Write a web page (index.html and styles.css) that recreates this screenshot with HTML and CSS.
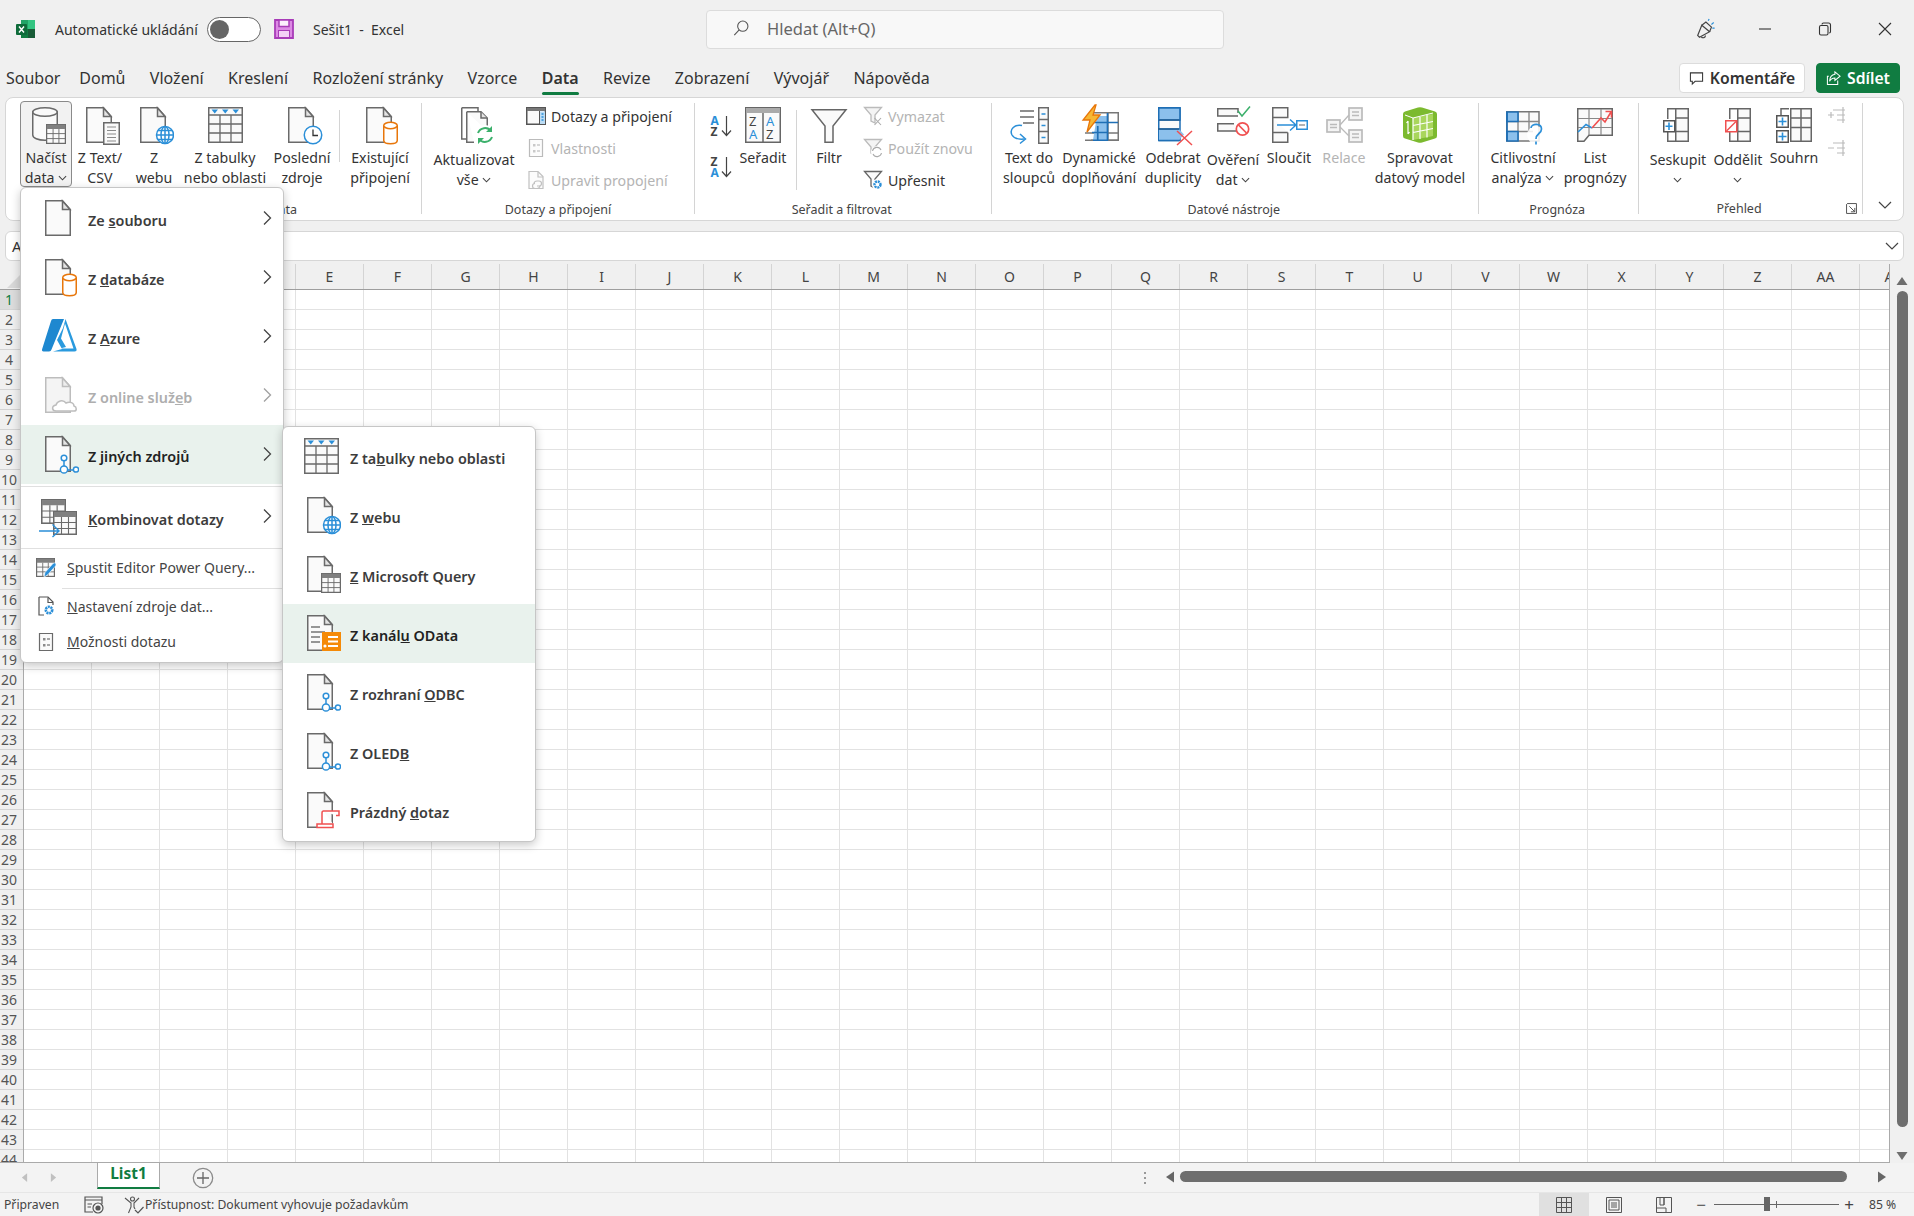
FILE: index.html
```html
<!DOCTYPE html>
<html lang="cs">
<head>
<meta charset="utf-8">
<title>Sešit1 - Excel</title>
<link rel="stylesheet" href="styles.css">
</head>
<body>
<svg class="defs" xmlns="http://www.w3.org/2000/svg">
  <symbol id="i-doc" viewBox="0 0 40 40"><path d="M6.75 2.75H23.5L31.25 11.5V37.25H6.75Z" fill="#fafafa" stroke="#6a6a6a" stroke-width="1.5"/><path d="M23.5 3V11.5H31Z" fill="#e4e4e4" stroke="#6a6a6a" stroke-width="1.5"/></symbol>
  <symbol id="i-docg" viewBox="0 0 40 40"><path d="M6.75 2.75H23.5L31.25 11.5V37.25H6.75Z" fill="#f4f4f4" stroke="#bdbdbd" stroke-width="1.5"/><path d="M23.5 3V11.5H31Z" fill="#eee" stroke="#bdbdbd" stroke-width="1.5"/></symbol>
  <symbol id="i-tbl" viewBox="0 0 24 24"><rect x=".75" y=".75" width="22.5" height="22.5" fill="#fafafa" stroke="#6a6a6a" stroke-width="1.5"/><rect x="1" y="1" width="22" height="5" fill="#808080"/><path d="M8.5 6V23M15.5 6V23M1 11.5H23M1 17.5H23" stroke="#6a6a6a" stroke-width="1.1" fill="none"/></symbol>
  <symbol id="i-cyl" viewBox="0 0 40 40"><path d="M23.75 21V35.5C23.75 37.5 26.5 38.75 30.5 38.75S37.25 37.5 37.25 35.5V21Z" fill="#fff" stroke="#e8760a" stroke-width="1.5"/><ellipse cx="30.5" cy="20.5" rx="6.75" ry="3.25" fill="#fff" stroke="#e8760a" stroke-width="1.5"/></symbol>
  <symbol id="i-globe" viewBox="0 0 40 40"><circle cx="31" cy="30" r="9" fill="#fff"/><g fill="none" stroke="#2b8fd8" stroke-width="1.5"><circle cx="31" cy="30" r="8.5"/><ellipse cx="31" cy="30" rx="4" ry="8.5"/><path d="M31 21.5V38.5M22.5 30H39.5M24 25.5H38M24 34.5H38"/></g></symbol>
  <symbol id="i-nodes" viewBox="0 0 40 40"><g fill="#fff" stroke="#2b8fd8" stroke-width="1.5"><path d="M25 25V36H37" fill="none"/><circle cx="25" cy="24" r="2.8"/><circle cx="25" cy="35.5" r="3.6"/><circle cx="37" cy="35.5" r="2.6"/></g></symbol>
  <symbol id="i-chev" viewBox="0 0 10 6"><path d="M1 1L5 5L9 1" fill="none" stroke="#444" stroke-width="1.2"/></symbol>
  <symbol id="i-right" viewBox="0 0 10 16"><path d="M2 1.5L8.5 8L2 14.5" fill="none" stroke="#444" stroke-width="1.3"/></symbol>
  <symbol id="i-grid3" viewBox="0 0 40 40"><rect x="3.75" y="2.75" width="33.5" height="34.5" fill="#fafafa" stroke="#6a6a6a" stroke-width="1.5"/><path d="M4 10H37M15 10V37M26 10V37M4 19H37M4 28H37" stroke="#6a6a6a" stroke-width="1.3" fill="none"/><path d="M6.5 4.5H13L9.75 8.5ZM17 4.5H23.5L20.25 8.5ZM27.5 4.5H34L30.75 8.5Z" fill="#2b8fd8"/></symbol>
  <symbol id="i-list" viewBox="0 0 20 20"><path d="M3.5 1.5H16.5V18.5H3.5Z" fill="#fafafa" stroke="#6a6a6a" stroke-width="1.2"/><path d="M7 6H9.5V8.5H7ZM7 12H9.5V14.5H7Z" fill="#8a8a8a"/><path d="M11 7H14M11 13H14" stroke="#8a8a8a" stroke-width="1.3"/></symbol>
  <symbol id="i-funnel" viewBox="0 0 20 20"><path d="M1.5 1.5H18.5L12 9V17L8 15V9Z" fill="#f4f4f4" stroke="#bbb" stroke-width="1.3"/></symbol>
</svg>

<div class="app">
  <header class="titlebar">
    <svg class="logo" viewBox="0 0 20 20"><path d="M5 1H19V19H5Z" fill="#21a366"/><path d="M12 1H19V10H12Z" fill="#33c481"/><path d="M5 10H12V19H5Z" fill="#107c41"/><path d="M12 10H19V19H12Z" fill="#185c37"/><rect x="0" y="5" width="11" height="11" rx="1" fill="#0e6b3a"/><path d="M3 7.5L8 13.5M8 7.5L3 13.5" stroke="#fff" stroke-width="1.4"/></svg>
    <span class="autosave">Automatické ukládání</span>
    <span class="toggle"><span class="knob"></span></span>
    <svg class="save" viewBox="0 0 20 20"><path d="M1 1H19V19H1Z" fill="#dc8ae4" stroke="#a83cb8" stroke-width="1.8"/><rect x="5" y="1" width="10" height="6.5" fill="#fbeffc" stroke="#a83cb8" stroke-width="1.5"/><rect x="4.5" y="11.5" width="11" height="7" fill="#f3d0f6" stroke="#a83cb8" stroke-width="1"/></svg>
    <span class="docname">Sešit1&nbsp; -&nbsp; Excel</span>
    <div class="search">
      <svg class="search-ic" viewBox="0 0 20 20"><circle cx="12" cy="8" r="5.7" fill="none" stroke="#555" stroke-width="1.2"/><path d="M8 12L2.5 18" stroke="#555" stroke-width="1.2"/></svg>
      <span>Hledat (Alt+Q)</span>
    </div>
    <div class="winbtns">
      <svg class="winbtn mega" viewBox="0 0 24 24"><path d="M4 19L8.5 8L17 15L6 21Z" fill="none" stroke="#444" stroke-width="1.3"/><path d="M8.5 8L13 4.5L19 10L17 15" fill="none" stroke="#444" stroke-width="1.3"/><path d="M8 20.5a2.5 2.5 0 0 0 4.5-1.5" fill="none" stroke="#444" stroke-width="1.3"/><path d="M19 7L21.5 5M15.5 3L16.5 1M20 11L22.5 11" stroke="#2b8fd8" stroke-width="1.3"/></svg>
      <svg class="winbtn" viewBox="0 0 16 16"><path d="M2 8H14" stroke="#333" stroke-width="1.1"/></svg>
      <svg class="winbtn" viewBox="0 0 16 16"><rect x="2.5" y="4.5" width="8.5" height="9.5" rx="1.5" fill="none" stroke="#333" stroke-width="1.1"/><path d="M5 3.5Q5 2 6.5 2H11.5Q13.5 2 13.5 4V10.5Q13.5 11.8 12.2 12" fill="none" stroke="#333" stroke-width="1.1"/></svg>
      <svg class="winbtn" viewBox="0 0 16 16"><path d="M2 2L14 14M14 2L2 14" stroke="#333" stroke-width="1.1"/></svg>
    </div>
  </header>

  <nav class="tabbar">
    <span class="tab first">Soubor</span>
    <span class="tab">Domů</span>
    <span class="tab">Vložení</span>
    <span class="tab">Kreslení</span>
    <span class="tab">Rozložení stránky</span>
    <span class="tab">Vzorce</span>
    <span class="tab active">Data</span>
    <span class="tab">Revize</span>
    <span class="tab">Zobrazení</span>
    <span class="tab">Vývojář</span>
    <span class="tab">Nápověda</span>
    <span class="tab-actions">
      <button class="comment"><svg viewBox="0 0 16 16"><path d="M1.5 2H14.5V11H6.5L3.5 14V11H1.5Z" fill="none" stroke="#333" stroke-width="1.1"/></svg>Komentáře</button>
      <button class="share"><svg viewBox="0 0 16 16"><path d="M3 5.5H1.5V14.5H12.5V10" fill="none" stroke="#fff" stroke-width="1.1"/><path d="M9.5 1L15 5.5L9.5 10V7.5C7 7.5 5 8.5 3.8 11C4 7 6 4 9.5 3.5Z" fill="none" stroke="#fff" stroke-width="1.1"/></svg>Sdílet</button>
    </span>
  </nav>

  <section class="ribbon">
    <div class="group g1">
      <div class="body">
        <div class="btn w52 pressed">
          <svg class="ic"><path d="M6.75 7V30C6.75 33 12 35.25 19 35.25S31.25 33 31.25 30V7Z" fill="#fafafa" stroke="#6a6a6a" stroke-width="1.5"/><ellipse cx="19" cy="7" rx="12.25" ry="4.25" fill="#fafafa" stroke="#6a6a6a" stroke-width="1.5"/><use href="#i-tbl" x="20" y="19" width="20" height="20"/></svg>
          <span class="lbl">Načíst<br>data <svg class="chev"><use href="#i-chev"/></svg></span>
        </div>
        <div class="btn w56">
          <svg class="ic"><use href="#i-doc"/><path d="M23.75 17.75H39.25V39.25H23.75Z" fill="#fafafa" stroke="#6a6a6a" stroke-width="1.5"/><path d="M27 22H36M27 25.5H36M27 29H36M27 32.5H36M27 36H36" stroke="#8a8a8a" stroke-width="1.2"/></svg>
          <span class="lbl">Z Text/<br>CSV</span>
        </div>
        <div class="btn w52">
          <svg class="ic"><use href="#i-doc"/><use href="#i-globe"/></svg>
          <span class="lbl">Z<br>webu</span>
        </div>
        <div class="btn w90">
          <svg class="ic"><use href="#i-grid3"/></svg>
          <span class="lbl">Z tabulky<br>nebo oblasti</span>
        </div>
        <div class="btn w64">
          <svg class="ic"><use href="#i-doc"/><circle cx="31" cy="30" r="8.75" fill="#fff" stroke="#2b8fd8" stroke-width="1.5"/><path d="M31 24.5V30.5H36" fill="none" stroke="#333" stroke-width="1.3"/></svg>
          <span class="lbl">Poslední<br>zdroje</span>
        </div>
        <i class="sep s1"></i>
        <div class="btn w70">
          <svg class="ic"><use href="#i-doc"/><use href="#i-cyl"/></svg>
          <span class="lbl">Existující<br>připojení</span>
        </div>
      </div>
      <div class="glabel">Načíst a transformovat data</div>
    </div>

    <div class="group g2">
      <div class="body">
        <div class="btn w104 low">
          <svg class="ic"><path d="M7.75 2.75H24V6M7.75 2.75V34H12" fill="none" stroke="#6a6a6a" stroke-width="1.5"/><path d="M12.75 6.75H27L33.25 13V26M12.75 6.75V37.25H20" fill="#fafafa" stroke="#6a6a6a" stroke-width="1.5"/><path d="M27 7V13H33" fill="#e4e4e4" stroke="#6a6a6a" stroke-width="1.5"/><circle cx="31" cy="30" r="10" fill="#fff"/><path d="M24 28A7.5 7.5 0 0 1 37 26M38 32A7.5 7.5 0 0 1 25 34" fill="none" stroke="#3bb06b" stroke-width="2"/><path d="M38 21V27H32ZM24 39V33H30Z" fill="#3bb06b"/></svg>
          <span class="lbl">Aktualizovat<br>vše <svg class="chev"><use href="#i-chev"/></svg></span>
        </div>
        <div class="col">
          <div class="sm"><svg class="ic20" viewBox="0 0 20 20"><rect x=".75" y="1.75" width="18.5" height="16.5" fill="#fafafa" stroke="#555" stroke-width="1.5"/><rect x="1" y="2" width="18" height="3" fill="#777"/><path d="M13.5 5V18" stroke="#555"/><path d="M14 5.5H19V18H14Z" fill="#bcdcf4"/><path d="M15.5 8H17.5M15.5 11H17.5M15.5 14H17.5" stroke="#2b8fd8" stroke-width="1.3"/></svg>Dotazy a připojení</div>
          <div class="sm off"><svg class="ic20 dim" viewBox="0 0 20 20"><use href="#i-list"/></svg>Vlastnosti</div>
          <div class="sm off"><svg class="ic20 dim" viewBox="0 0 20 20"><path d="M3 1.5H12L17 6.5V18.5H3Z" fill="#fafafa" stroke="#777" stroke-width="1.2"/><path d="M12 2V7H17" fill="none" stroke="#777" stroke-width="1.2"/><path d="M8 14a3 3 0 0 1 3-3h2a2.5 2.5 0 0 1 0 5h-2M14 15.5a3 3 0 0 1-3 3H9a2.5 2.5 0 0 1 0-5" fill="none" stroke="#777" stroke-width="1.2"/></svg>Upravit propojení</div>
        </div>
      </div>
      <div class="glabel">Dotazy a připojení</div>
    </div>

    <div class="group g3">
      <div class="body">
        <div class="sortcol">
          <svg class="sorti" viewBox="0 0 22 24"><text x="0" y="11" class="az blue">A</text><text x="0" y="22" class="az">Z</text><path d="M16 2V21M11.5 16.5L16 21.5L20.5 16.5" fill="none" stroke="#444" stroke-width="1.2"/></svg>
          <svg class="sorti" viewBox="0 0 22 24"><text x="0" y="11" class="az">Z</text><text x="0" y="22" class="az blue">A</text><path d="M16 2V21M11.5 16.5L16 21.5L20.5 16.5" fill="none" stroke="#444" stroke-width="1.2"/></svg>
        </div>
        <div class="btn w56">
          <svg class="ic"><rect x="2.75" y="2.75" width="34.5" height="34.5" fill="#fafafa" stroke="#666" stroke-width="1.5"/><rect x="3" y="3" width="34" height="5" fill="#aaa"/><path d="M20 8V37" stroke="#666" stroke-width="1.5"/><text x="6" y="21" class="az2">Z</text><text x="6" y="34" class="az2 blue">A</text><text x="23" y="21" class="az2 blue">A</text><text x="23" y="34" class="az2">Z</text></svg>
          <span class="lbl">Seřadit</span>
        </div>
        <i class="sep s2"></i>
        <div class="btn w54">
          <svg class="ic"><path d="M3 4.75H37L24 21V37.25H16V21Z" fill="#fafafa" stroke="#666" stroke-width="1.5"/></svg>
          <span class="lbl">Filtr</span>
        </div>
        <div class="col c3">
          <div class="sm off"><svg class="ic20" viewBox="0 0 20 20"><use href="#i-funnel"/><path d="M11.5 12L18 19M18 12L11.5 19" stroke="#aaa" stroke-width="1.1"/></svg>Vymazat</div>
          <div class="sm off"><svg class="ic20" viewBox="0 0 20 20"><use href="#i-funnel"/><circle cx="14" cy="14" r="6" fill="#fff"/><path d="M9.5 13A4.5 4.5 0 0 1 18 12M18.5 15A4.5 4.5 0 0 1 10 16" fill="none" stroke="#aaa" stroke-width="1.1"/></svg>Použít znovu</div>
          <div class="sm"><svg class="ic20" viewBox="0 0 20 20"><path d="M1.5 1.5H18.5L12 9V18L8 16V9Z" fill="#fafafa" stroke="#666" stroke-width="1.3"/><circle cx="14.5" cy="14.5" r="5.5" fill="#fff"/><circle cx="14.5" cy="14.5" r="3" fill="none" stroke="#2b8fd8" stroke-width="2.4" stroke-dasharray="2 .8"/></svg>Upřesnit</div>
        </div>
      </div>
      <div class="glabel">Seřadit a filtrovat</div>
    </div>

    <div class="group g4">
      <div class="body">
        <div class="btn w64">
          <svg class="ic"><path d="M11 6H25M11 12H25M14 18H25" stroke="#6a6a6a" stroke-width="1.5"/><rect x="29.75" y="2.75" width="9.5" height="35.5" fill="#fafafa" stroke="#6a6a6a" stroke-width="1.5"/><path d="M30 14.5H39M30 26.5H39" stroke="#6a6a6a" stroke-width="1.5"/><path d="M32.5 9H36.5M32.5 20.5H36.5M32.5 32.5H36.5" stroke="#2b8fd8" stroke-width="1.5"/><path d="M13 20.5C6 19 0 24 3 30C5 33.5 10 34.5 15 34" fill="none" stroke="#2b8fd8" stroke-width="1.5"/><path d="M11 29L16.5 34L11 38.5" fill="none" stroke="#2b8fd8" stroke-width="1.5"/></svg>
          <span class="lbl">Text do<br>sloupců</span>
        </div>
        <div class="btn w76">
          <svg class="ic"><path d="M12 7.75H39.25V35.25H12" fill="none" stroke="#777" stroke-width="1.5"/><path d="M6 28H39M6 35.25H39M29 8V35" stroke="#777" stroke-width="1.3"/><path d="M18 11H28.5V35H14Z" fill="#8cc0ec"/><path d="M13 17.5H39M13 27.5H28.5M18.75 21V35.5M28.5 8V35.5M14 35.25H29" fill="none" stroke="#1f6fb5" stroke-width="1.7"/><path d="M16 0H17L14 10H21L8 27L11 15H4Z" fill="#f7b733" stroke="#e8760a" stroke-width="1.3"/></svg>
          <span class="lbl">Dynamické<br>doplňování</span>
        </div>
        <div class="btn w72">
          <svg class="ic"><path d="M5.75 2.75H27V35.5H5.75Z" fill="#fafafa" stroke="#1f6fb5" stroke-width="1.5"/><rect x="6" y="3" width="20.5" height="12" fill="#8cc0ec"/><path d="M6 24H26L31 29.5L26 35H6Z" fill="#8cc0ec"/><path d="M5.5 15H27M5.5 24H26" stroke="#333" stroke-width="1.4"/><path d="M5.75 3H27V15H5.75ZM5.75 24H26.5M5.75 35.5H26" fill="none" stroke="#1f6fb5" stroke-width="1.5"/><path d="M24 26L39 40M39 26L24 40" stroke="#f05050" stroke-width="1.5"/></svg>
          <span class="lbl">Odebrat<br>duplicity</span>
        </div>
        <div class="btn w48 low">
          <svg class="ic nudge"><path d="M29 11H8.75V3.75H29V8M32 26H8.75V18.75H25" fill="#fafafa" stroke="#666" stroke-width="1.5"/><path d="M29 6L33 11L41 1.5" fill="none" stroke="#3bb06b" stroke-width="1.5"/><circle cx="33.5" cy="24" r="6.2" fill="#fff" stroke="#f05050" stroke-width="1.7"/><path d="M29.5 20L37.5 28" stroke="#f05050" stroke-width="1.7"/></svg>
          <span class="lbl">Ověření<br>dat <svg class="chev"><use href="#i-chev"/></svg></span>
        </div>
        <div class="btn w64">
          <svg class="ic"><path d="M3.75 2.75H18.75V12.5H3.75ZM3.75 12.5V27.5H18.75M3.75 27.5V37.25H18.75V27.5" fill="#fafafa" stroke="#666" stroke-width="1.5"/><path d="M8 20H26M21 14.5L27 20L21 25.5" fill="none" stroke="#2b8fd8" stroke-width="1.4"/><rect x="27.75" y="15.75" width="10.5" height="8.5" fill="#fff" stroke="#2b8fd8" stroke-width="1.5"/><path d="M30 20H36" stroke="#888" stroke-width="1.3"/></svg>
          <span class="lbl">Sloučit</span>
        </div>
        <div class="btn w46 off">
          <svg class="ic"><rect x="3" y="15" width="13" height="12" fill="#f4f4f4" stroke="#bbb" stroke-width="1.7"/><rect x="25" y="3" width="13" height="12" fill="#f4f4f4" stroke="#bbb" stroke-width="1.7"/><rect x="25" y="25" width="13" height="12" fill="#f4f4f4" stroke="#bbb" stroke-width="1.7"/><path d="M16 20L25 10M16 22L25 31M6 19.5H13M6 22.5H13M28 7H35M28 10.5H35M28 29H35M28 32.5H35" stroke="#bbb" stroke-width="1.3"/></svg>
          <span class="lbl">Relace</span>
        </div>
        <div class="btn w106">
          <svg class="ic"><path d="M3 9Q3 7 5 6.5L18 2.5Q20 2 22 2.5L35 6.5Q37 7 37 9V31Q37 33 35 33.5L22 37.5Q20 38 18 37.5L5 33.5Q3 33 3 31Z" fill="#7cba2f"/><path d="M13 13L33 9V31L13 35Z" fill="#a9d65c"/><path d="M13 13V35M20 12V34M27 10V32.5M13 20.5L33 16.5M13 27.5L33 23.5" fill="none" stroke="#fff" stroke-width="1.2"/><path d="M5 10L13 13L33 8" fill="none" stroke="#fff" stroke-width="1"/><path d="M8 16V29M8 16L6.5 18M8 29L9.5 27" fill="none" stroke="#fff" stroke-width="1.2"/></svg>
          <span class="lbl">Spravovat<br>datový model</span>
        </div>
      </div>
      <div class="glabel">Datové nástroje</div>
    </div>

    <div class="group g5">
      <div class="body">
        <div class="btn w88">
          <svg class="ic"><path d="M3.75 6.75H36V36H3.75Z" fill="#fafafa" stroke="#777" stroke-width="1.5"/><path d="M15 7V36M26 7V27M4 16.5H36M4 26.5H30" stroke="#888" stroke-width="1.4"/><path d="M4 7H15V16.5H4ZM4 26.5H15V36H4Z" fill="#8cc0ec" stroke="#1f6fb5" stroke-width="1.6"/><path d="M4 7V36" stroke="#1f6fb5" stroke-width="1.6"/><circle cx="33" cy="30" r="9" fill="#fff" opacity=".85"/><path d="M28 23C28.5 18 38.5 18 38.5 24C38.5 29 33 28 33 34" fill="none" stroke="#2b8fd8" stroke-width="1.7"/><path d="M33 36.5V39.5" stroke="#2b8fd8" stroke-width="1.7"/></svg>
          <span class="lbl">Citlivostní<br>analýza <svg class="chev"><use href="#i-chev"/></svg></span>
        </div>
        <div class="btn w56">
          <svg class="ic"><path d="M2.75 3.75H37.25V30.25H14L9 36.25H2.75Z" fill="#fafafa" stroke="#666" stroke-width="1.5"/><path d="M14 4V30M26 4V30M3 13.5H37M3 22.5H37" stroke="#888" stroke-width="1.2"/><path d="M3 27L11 19.5L17 23" fill="none" stroke="#2b8fd8" stroke-width="1.6"/><path d="M17 23L26 13L30 17L36 7M30.5 6.5H36.5V12.5" fill="none" stroke="#f05050" stroke-width="1.6"/></svg>
          <span class="lbl">List<br>prognózy</span>
        </div>
      </div>
      <div class="glabel">Prognóza</div>
    </div>

    <div class="group g6">
      <div class="body">
        <div class="btn w64 low">
          <svg class="ic"><path d="M17.75 3.75H30.25V36.25H17.75ZM18 13H30M18 26.5H30" fill="#fafafa" stroke="#666" stroke-width="1.5"/><path d="M17 3.75H9.75V14M9.75 26V36.25H17" fill="none" stroke="#666" stroke-width="1.5"/><rect x="5.75" y="15.75" width="11" height="11" fill="#fff" stroke="#555" stroke-width="1.5"/><path d="M11 17.5V25M7.5 21.2H14.5" stroke="#2b8fd8" stroke-width="1.6"/></svg>
          <span class="lbl">Seskupit<br><svg class="chev"><use href="#i-chev"/></svg></span>
        </div>
        <div class="btn w56 low">
          <svg class="ic"><path d="M19.75 3.75H32.25V36.25H19.75ZM20 13H32M20 26.5H32" fill="#fafafa" stroke="#666" stroke-width="1.5"/><path d="M19 3.75H11.75V14M11.75 26V36.25H19" fill="none" stroke="#666" stroke-width="1.5"/><rect x="7.75" y="15.75" width="11" height="11" fill="#fff" stroke="#f05050" stroke-width="1.5"/><path d="M8.5 26L18 16.5" stroke="#f05050" stroke-width="1.4"/></svg>
          <span class="lbl">Oddělit<br><svg class="chev"><use href="#i-chev"/></svg></span>
        </div>
        <div class="btn w56">
          <svg class="ic"><path d="M16.75 3.75H37.25V36.25H16.75ZM16.75 13H37.25M16.75 22.5H37.25M27 3.75V36.25" fill="#fafafa" stroke="#666" stroke-width="1.5"/><path d="M15 3.75H7V10M7 31V36.25H10" fill="none" stroke="#666" stroke-width="1.5"/><rect x="2.75" y="10.75" width="11.5" height="11.5" fill="#fff" stroke="#555" stroke-width="1.5"/><rect x="2.75" y="25.75" width="11.5" height="11.5" fill="#fff" stroke="#555" stroke-width="1.5"/><path d="M8.5 12.5V20.5M4.5 16.5H12.5M8.5 27.5V35.5M4.5 31.5H12.5" stroke="#2b8fd8" stroke-width="1.6"/></svg>
          <span class="lbl">Souhrn</span>
        </div>
        <div class="outline">
          <svg class="ic20" viewBox="0 0 20 20"><path d="M1 10H7M4 7V13M6 5H18M10 10H18M10 15H18M16 2V18" stroke="#bbb" stroke-width="1.2" fill="none"/></svg>
          <svg class="ic20" viewBox="0 0 20 20"><path d="M1 10H7M6 5H18M10 10H18M10 15H18M16 2V18" stroke="#bbb" stroke-width="1.2" fill="none"/></svg>
        </div>
      </div>
      <div class="glabel">Přehled</div>
      <svg class="launcher" viewBox="0 0 10 10"><path d="M1 .5H9.5V9.5H.5V1M3 3L8 8M8 4.5V8H4.5" fill="none" stroke="#555" stroke-width=".9"/></svg>
    </div>
    <svg class="collapse" viewBox="0 0 14 8"><path d="M1 1L7 7L13 1" fill="none" stroke="#444" stroke-width="1.2"/></svg>
  </section>

  <section class="formula">
    <span class="namebox">A1</span>
    <svg class="fchev" viewBox="0 0 14 8"><path d="M1 1L7 7L13 1" fill="none" stroke="#444" stroke-width="1.2"/></svg>
  </section>

  <section class="sheet">
    <div class="sheet-main">
      <div class="colhead">
        <span class="corner"><i></i></span>
        <span>A</span><span>B</span><span>C</span><span>D</span><span>E</span><span>F</span><span>G</span><span>H</span><span>I</span><span>J</span><span>K</span><span>L</span><span>M</span><span>N</span><span>O</span><span>P</span><span>Q</span><span>R</span><span>S</span><span>T</span><span>U</span><span>V</span><span>W</span><span>X</span><span>Y</span><span>Z</span><span>AA</span><span>AB</span>
      </div>
      <div class="gridrow">
        <div class="rowhead">
          <span class="cur">1</span><span>2</span><span>3</span><span>4</span><span>5</span><span>6</span><span>7</span><span>8</span><span>9</span><span>10</span><span>11</span><span>12</span><span>13</span><span>14</span><span>15</span><span>16</span><span>17</span><span>18</span><span>19</span><span>20</span><span>21</span><span>22</span><span>23</span><span>24</span><span>25</span><span>26</span><span>27</span><span>28</span><span>29</span><span>30</span><span>31</span><span>32</span><span>33</span><span>34</span><span>35</span><span>36</span><span>37</span><span>38</span><span>39</span><span>40</span><span>41</span><span>42</span><span>43</span><span>44</span>
        </div>
        <div class="cells"></div>
      </div>
    </div>
    <div class="vscroll">
      <svg class="arrow" viewBox="0 0 12 10"><path d="M6 1L11.5 9H.5Z" fill="#6e6e6e"/></svg>
      <div class="vthumb"></div>
      <svg class="arrow" viewBox="0 0 12 10"><path d="M6 9L11.5 1H.5Z" fill="#6e6e6e"/></svg>
    </div>
  </section>

  <section class="sheetbar">
    <svg class="nav" viewBox="0 0 8 12"><path d="M7 1V11L1 6Z" fill="#c0c0c0"/></svg>
    <svg class="nav n2" viewBox="0 0 8 12"><path d="M1 1V11L7 6Z" fill="#c0c0c0"/></svg>
    <div class="sheettab">List1</div>
    <svg class="addsheet" viewBox="0 0 22 22"><circle cx="11" cy="11" r="9.7" fill="none" stroke="#8a8a8a" stroke-width="1.3"/><path d="M11 5V17M5 11H17" stroke="#666" stroke-width="1.3"/></svg>
    <span class="dots"></span>
    <svg class="harrow" viewBox="0 0 10 12"><path d="M1 6L9 .5V11.5Z" fill="#666"/></svg>
    <div class="hthumb"></div>
    <svg class="harrow hr" viewBox="0 0 10 12"><path d="M9 6L1 .5V11.5Z" fill="#666"/></svg>
  </section>

  <footer class="status">
    <span class="ready">Připraven</span>
    <svg class="st-ic macro" viewBox="0 0 20 18"><path d="M1 1H18V4H1ZM1 4V16H9M18 4V8" fill="none" stroke="#555" stroke-width="1.2"/><path d="M3.5 8H8M3.5 11H7" stroke="#555" stroke-width="1.2"/><circle cx="14" cy="12" r="5" fill="none" stroke="#555" stroke-width="1.2"/><circle cx="14" cy="12" r="2.6" fill="#555"/></svg>
    <svg class="st-ic access" viewBox="0 0 20 18"><circle cx="8.5" cy="3" r="2" fill="none" stroke="#555" stroke-width="1.1"/><path d="M1 2L7 7V11L4.5 17M15 2L10 7V11L11 13" fill="none" stroke="#555" stroke-width="1.1"/><path d="M11 14L14 17L19.5 11" fill="none" stroke="#555" stroke-width="1.2"/></svg>
    <span class="acc">Přístupnost: Dokument vyhovuje požadavkům</span>
    <div class="views">
      <span class="view on"><svg viewBox="0 0 16 16"><path d="M.5.5H15.5V15.5H.5ZM5.5.5V15.5M10.5.5V15.5M.5 5.5H15.5M.5 10.5H15.5" fill="none" stroke="#555"/></svg></span>
      <span class="view"><svg viewBox="0 0 16 16"><path d="M.5.5H15.5V15.5H.5Z" fill="none" stroke="#555"/><path d="M3 3H13V13H3Z" fill="none" stroke="#555"/><path d="M5 6H11M5 8H11M5 10H11" stroke="#555"/></svg></span>
      <span class="view"><svg viewBox="0 0 16 16"><path d="M.5.5H15.5V15.5H.5ZM4 .5V8H8V.5M8 .5V8M.5 11H10V15" fill="none" stroke="#555"/></svg></span>
    </div>
    <div class="zoom">
      <span class="zm">−</span>
      <span class="slider"><i class="thumb"></i><i class="tick"></i></span>
      <span class="zm">+</span>
      <span class="pct">85 %</span>
    </div>
  </footer>
</div>

<div class="menu main-menu">
  <div class="mi"><svg class="mic"><use href="#i-doc"/></svg><span class="mt">Ze <u>s</u>ouboru</span><svg class="arr"><use href="#i-right"/></svg></div>
  <div class="mi"><svg class="mic"><use href="#i-doc"/><use href="#i-cyl"/></svg><span class="mt">Z <u>d</u>atabáze</span><svg class="arr"><use href="#i-right"/></svg></div>
  <div class="mi"><svg class="mic"><path d="M14 3H25L12.5 33.5Q12 35.5 10 35.5H4.5Q2.5 35.5 3 33.5L12 5Q12.5 3 14 3Z" fill="#1e88d0"/><path d="M26.5 3L37.5 33Q38 35.5 35.5 35.5H14L23 33L18 24L24 12Z" fill="#2a9ade"/><path d="M26 7.5L34.5 32.5H21L27 31L22 22.5Z" fill="#fff"/></svg><span class="mt">Z <u>A</u>zure</span><svg class="arr"><use href="#i-right"/></svg></div>
  <div class="mi dis"><svg class="mic"><use href="#i-docg"/><path d="M17 36C13 36 12 31 17 30C18 26 24 24 27 28C31 26 35 28 35 31C38 32 38 36 35 36Z" fill="#fff" stroke="#bdbdbd" stroke-width="1.5"/></svg><span class="mt">Z online služ<u>e</u>b</span><svg class="arr off"><use href="#i-right"/></svg></div>
  <div class="mi hover"><svg class="mic"><use href="#i-doc"/><use href="#i-nodes"/></svg><span class="mt">Z <u>j</u>iných zdrojů</span><svg class="arr"><use href="#i-right"/></svg></div>
  <div class="mi combine"><svg class="mic"><use href="#i-tbl" x="2" y="2" width="25" height="25"/><use href="#i-tbl" x="14" y="14" width="24" height="24"/><path d="M0 34H19M13.5 27.5L20 34L13.5 40" fill="none" stroke="#2b8fd8" stroke-width="1.4"/></svg><span class="mt"><u>K</u>ombinovat dotazy</span><svg class="arr"><use href="#i-right"/></svg></div>
  <div class="ms s-pq"><svg class="ic20" viewBox="0 0 20 20"><use href="#i-tbl" x="0" y="0" width="19" height="19"/><path d="M8 19L9 14.5L17 5.5Q19 4 20 6Q20 7.5 19.5 8L11.5 17L7.5 19.5Z" fill="#2b8fd8" stroke="#fff" stroke-width=".6"/></svg><span><u>S</u>pustit Editor Power Query...</span></div>
  <div class="ms s-set"><svg class="ic20" viewBox="0 0 20 20"><path d="M3 1H12L17 6V9M3 1V19H8" fill="none" stroke="#555" stroke-width="1.2"/><path d="M12 1.5V6.5H17" fill="none" stroke="#555" stroke-width="1.2"/><circle cx="13" cy="14" r="3.2" fill="none" stroke="#2b8fd8" stroke-width="2.6" stroke-dasharray="2 .7"/></svg><span><u>N</u>astavení zdroje dat...</span></div>
  <div class="ms s-opt"><svg class="ic20" viewBox="0 0 20 20"><use href="#i-list"/></svg><span><u>M</u>ožnosti dotazu</span></div>
</div>

<div class="menu sub-menu">
  <div class="mi"><svg class="mic"><use href="#i-grid3"/></svg><span class="mt">Z ta<u>b</u>ulky nebo oblasti</span></div>
  <div class="mi"><svg class="mic"><use href="#i-doc"/><use href="#i-globe"/></svg><span class="mt">Z <u>w</u>ebu</span></div>
  <div class="mi"><svg class="mic"><use href="#i-doc"/><use href="#i-tbl" x="20" y="19" width="20" height="20"/></svg><span class="mt"><u>Z</u> Microsoft Query</span></div>
  <div class="mi hover"><svg class="mic"><use href="#i-doc"/><path d="M10 14H19M10 19H24M10 24H19M10 29H19" stroke="#777" stroke-width="1.4"/><rect x="21" y="19" width="19" height="19" fill="#f58a07"/><path d="M27 24H37M27 28.5H37M27 33H37" stroke="#fff" stroke-width="2"/><circle cx="24" cy="33" r="1.6" fill="#fff"/></svg><span class="mt">Z kanál<u>u</u> OData</span></div>
  <div class="mi"><svg class="mic"><use href="#i-doc"/><use href="#i-nodes"/></svg><span class="mt">Z rozhraní <u>O</u>DBC</span></div>
  <div class="mi"><svg class="mic"><use href="#i-doc"/><use href="#i-nodes"/></svg><span class="mt">Z OLED<u>B</u></span></div>
  <div class="mi"><svg class="mic"><use href="#i-doc"/><path d="M22 21H38V25.5H35M22.5 21C21 21 21 22 21 23V34H32V37.5H16V34H32" fill="#fff" stroke="#f05050" stroke-width="1.5"/></svg><span class="mt">Prázdný <u>d</u>otaz</span></div>
</div>
</body>
</html>
```
FILE: styles.css
```css
* { box-sizing: border-box; }
html, body { margin: 0; height: 100%; overflow: hidden; }
body { font-family: "Noto Sans", "Open Sans", sans-serif; font-size: 14px; color: #333; background: #f0f0f0; position: relative; }
.defs { position: absolute; width: 0; height: 0; }
.app { width: 1914px; height: 1216px; display: flex; flex-direction: column; }

/* title bar */
.titlebar { height: 58px; display: flex; align-items: center; flex: none; position: relative; padding-left: 16px; }
.logo { width: 20px; height: 20px; flex: none; }
.autosave { margin-left: 19px; width: 152px; white-space: nowrap; }
.toggle { width: 54px; height: 25px; border: 1.5px solid #666; border-radius: 13px; background: #fff; display: flex; align-items: center; padding-left: 2px; }
.knob { width: 19px; height: 19px; border-radius: 50%; background: #666; }
.save { width: 20px; height: 20px; margin-left: 13px; }
.docname { margin-left: 19px; width: 393px; white-space: nowrap; }
.search { width: 518px; height: 39px; background: #f8f8f8; border: 1px solid #dcdcdc; border-radius: 4px; display: flex; align-items: center; padding: 0 0 2px 25px; font-size: 16.5px; color: #666; }
.search-ic { width: 18px; height: 18px; margin-right: 17px; }
.winbtns { margin-left: auto; display: flex; align-items: center; gap: 44px; padding-right: 21px; }
.winbtn { width: 16px; height: 16px; }
.winbtn.mega { width: 22px; height: 22px; margin-right: -3px; }

/* tabs */
.tabbar { height: 39px; flex: none; display: flex; align-items: flex-start; font-size: 16px; padding-left: 6px; }
.tab { position: relative; height: 37px; line-height: 40px; padding: 0 12.2px; white-space: nowrap; color: #333; }
.tab.first { padding-left: 0; padding-right: 6.6px; }
.tab.active { font-weight: 600; }
.tab.active::after { content: ""; position: absolute; left: 12.2px; right: 12.2px; bottom: 0; height: 3px; background: #107c41; border-radius: 2px; }
.tab-actions { margin-left: auto; display: flex; gap: 11px; padding-right: 14px; padding-top: 5px; }
.tab-actions button { font: inherit; font-size: 15.7px; font-weight: 600; display: flex; align-items: center; height: 30px; border-radius: 4px; padding: 0; justify-content: center; gap: 6px; }
.tab-actions svg { width: 15px; height: 15px; }
.comment { width: 126px; background: #fff; border: 1px solid #dcdcdc; color: #333; }
.share { width: 84px; background: #107c41; border: 1px solid #107c41; color: #fff; }

/* ribbon */
.ribbon { height: 124px; flex: none; margin: 0 10px 0 5px; background: #fff; border: 1px solid #d6d6d6; border-radius: 8px; display: flex; align-items: flex-start; position: relative; padding-top: 5px; font-size: 14.2px; }
.group { height: 111px; border-right: 1px solid #d4d4d4; display: flex; flex-direction: column; position: relative; flex: none; }
.g1 { width: 416px; padding-left: 14px; }
.g2 { width: 273px; }
.g3 { width: 297px; padding-left: 10px; }
.g4 { width: 487px; padding-left: 5px; }
.g5 { width: 160px; }
.g6 { width: 224px; padding-left: 7px; }
.body { display: flex; height: 99px; flex: none; }
.glabel { font-size: 12.5px; line-height: 14px; margin-top: 1px; text-align: center; white-space: nowrap; color: #444; }
.g1 .glabel { padding-right: 10px; }
.g3 .glabel { margin-left: -12.5px; }
.g4 .glabel { margin-left: -7.5px; }
.g5 .glabel { margin-left: -2.5px; }
.g6 .glabel { margin-left: -30px; margin-top: 0; }
.btn { display: flex; flex-direction: column; align-items: center; padding-top: 2px; flex: none; height: 99px; }
.ic { width: 40px; height: 40px; flex: none; overflow: visible; }
.ic.nudge { margin-left: -8px; }
.lbl { margin-top: 3px; line-height: 20px; text-align: center; white-space: nowrap; color: #333; }
.low .lbl { margin-top: 5px; }
.off .lbl, .sm.off { color: #b4b4b4; }
.w46 { width: 46px; } .w48 { width: 48px; } .w52 { width: 52px; } .w54 { width: 54px; } .w56 { width: 56px; } .w64 { width: 64px; } .w70 { width: 70px; } .w72 { width: 72px; } .w76 { width: 76px; } .w88 { width: 88px; } .w90 { width: 90px; } .w104 { width: 104px; } .w106 { width: 106px; }
.pressed { height: 86px; margin-top: -2px; background: #f2f2f2; border: 1px solid #8a8a8a; border-radius: 4px; padding-top: 3px; }
.pressed .ic { margin-left: -1px; }
.sep { display: block; width: 1px; background: #d4d4d4; flex: none; }
.s1 { height: 52px; margin: 7px 5px 0 5px; }
.s2 { height: 80px; margin: 7px 5px 0 5px; }
.chev { width: 9px; height: 6px; vertical-align: 2px; }
.col { display: flex; flex-direction: column; gap: 12px; padding-top: 3px; }
.c3 { margin-left: 7px; }
.sm { height: 20px; display: flex; align-items: center; gap: 5px; white-space: nowrap; }
.ic20 { width: 20px; height: 20px; flex: none; }
.dim { opacity: .45; }
.sortcol { width: 30px; display: flex; flex-direction: column; gap: 17px; padding: 11px 0 0 5px; flex: none; }
.sorti { width: 23px; height: 24px; overflow: visible; }
.az { font: 700 12px "Noto Sans", sans-serif; fill: #444; }
.az2 { font: 400 13px "Noto Sans", sans-serif; fill: #444; }
.blue { fill: #2b8fd8; }
.outline { display: flex; flex-direction: column; gap: 13px; padding-top: 2px; margin-left: 5px; }
.launcher { position: absolute; right: 5px; bottom: 0; width: 11px; height: 11px; }
.collapse { width: 14px; height: 8px; position: absolute; right: 11px; bottom: 11px; }

/* formula bar */
.formula { height: 30px; flex: none; margin: 10px 10px 0 5px; background: #fff; border: 1px solid #d6d6d6; border-radius: 6px; display: flex; align-items: center; padding: 0 4px 0 6px; font-size: 15px; }
.fchev { width: 14px; height: 8px; margin-left: auto; }

/* sheet */
.sheet { height: 902px; flex: none; display: flex; padding-top: 3px; }
.sheet-main { width: 1890px; display: flex; flex-direction: column; border-right: 1px solid #aaa; overflow: hidden; }
.colhead { height: 26px; flex: none; display: flex; border-bottom: 1px solid #9e9e9e; }
.colhead span { width: 68px; flex: none; border-right: 1px solid #d4d4d4; text-align: center; line-height: 26px; color: #444; font-size: 14px; }
.colhead .corner { width: 24px; position: relative; border-right: 1px solid #aaa; }
.corner i { position: absolute; right: 3px; bottom: 1px; width: 13px; height: 13px; background: #d8d8d8; clip-path: polygon(100% 0, 100% 100%, 0 100%); }
.gridrow { height: 874px; display: flex; background: #fff; border-bottom: 1px solid #aaa; overflow: hidden; }
.rowhead { width: 24px; flex: none; background: #f0f0f0; border-right: 1px solid #aaa; overflow: hidden; display: flex; flex-direction: column; }
.rowhead span { height: 20px; flex: none; border-bottom: 1px solid #d4d4d4; line-height: 19px; padding-right: 5px; text-align: center; color: #555; font-size: 14px; }
.rowhead .cur { background: #dcdcdc; color: #107c41; }
.cells { flex: 1; background-image: repeating-linear-gradient(to right, transparent 0 67px, #e2e2e2 67px 68px), repeating-linear-gradient(to bottom, transparent 0 19px, #e2e2e2 19px 20px); }
.vscroll { flex: 1; display: flex; flex-direction: column; align-items: center; padding: 12px 0 0 0; }
.vscroll .arrow { width: 12px; height: 10px; flex: none; }
.vthumb { width: 11px; height: 836px; background: #6e6e6e; border-radius: 6px; margin: 5px 0 24px; flex: none; }

/* sheet tabs */
.sheetbar { height: 29px; flex: none; background: #f3f3f3; display: flex; align-items: flex-start; position: relative; }
.nav { width: 7px; height: 11px; margin: 9px 0 0 21px; flex: none; }
.nav.n2 { margin-left: 22px; }
.sheettab { width: 63px; height: 26px; margin-left: 40px; background: #fff; border: 1px solid #aaa; border-top: 0; border-bottom: 2px solid #107c41; text-align: center; line-height: 21px; color: #107c41; font-weight: 700; font-size: 15.5px; flex: none; }
.addsheet { width: 22px; height: 22px; margin: 4px 0 0 32px; flex: none; }
.dots { width: 2px; height: 12px; margin: 9px 0 0 930px; background-image: repeating-linear-gradient(to bottom, #999 0 2px, transparent 2px 5px); flex: none; }
.harrow { width: 10px; height: 12px; margin: 8px 0 0 19px; flex: none; }
.hthumb { width: 667px; height: 11px; margin: 8px 0 0 5px; border-radius: 6px; background: #6e6e6e; flex: none; }
.harrow.hr { margin-left: 30px; }

/* status bar */
.status { height: 24px; flex: none; background: #f3f3f3; border-top: 1px solid #e6e6e6; display: flex; align-items: center; font-size: 12.2px; padding-left: 4px; color: #444; }
.ready { width: 80px; white-space: nowrap; }
.st-ic { width: 20px; height: 18px; flex: none; }
.access { margin-left: 20px; }
.acc { margin-left: 1px; white-space: nowrap; }
.views { margin-left: auto; display: flex; height: 100%; }
.view { width: 50px; display: flex; align-items: center; justify-content: center; }
.view.on { background: #e0e0e0; }
.view svg { width: 16px; height: 16px; }
.zoom { display: flex; align-items: center; width: 225px; padding-left: 4px; color: #444; }
.zm { font-size: 17px; width: 16px; text-align: center; line-height: 20px; }
.slider { width: 125px; height: 1px; background: #666; margin: 0 2px 0 5px; position: relative; }
.thumb { position: absolute; left: 50px; top: -7px; width: 6px; height: 14px; background: #666; }
.tick { position: absolute; left: 62px; top: -3px; width: 1px; height: 7px; background: #666; }
.pct { margin-left: 12px; white-space: nowrap; }

/* dropdown menus */
.menu { position: absolute; background: #fff; border: 1px solid #c6c6c6; border-radius: 6px; box-shadow: 0 3px 10px rgba(0,0,0,.22); }
.main-menu { left: 20px; top: 187px; width: 264px; height: 476px; padding-top: 1px; }
.sub-menu { left: 282px; top: 426px; width: 254px; height: 416px; }
.mi { height: 59px; display: flex; align-items: center; padding-left: 18px; position: relative; }
.mic { width: 40px; height: 40px; flex: none; overflow: visible; margin-top: -2px; }
.mt { margin-left: 9px; padding-top: 4px; font-weight: 600; font-size: 14.4px; white-space: nowrap; color: #3c3c3c; }
.mi.hover { background: #e9f2ed; }
.mi.hover .mt { color: #222; }
.mi.dis .mt { color: #aeaeae; }
.arr { width: 10px; height: 16px; position: absolute; right: 11px; top: 21px; }
.arr.off { opacity: .5; }
.mi.combine { height: 62px; margin-top: 2px; border-top: 1px solid #e0e0e0; }
.ms { display: flex; align-items: center; padding: 0 0 2px 15px; gap: 11px; font-size: 14px; white-space: nowrap; color: #444; position: relative; }
.s-pq { height: 40px; border-top: 1px solid #e0e0e0; }
.s-set { height: 38px; }
.s-set::before { content: ""; position: absolute; left: 41px; right: 0; top: 0; border-top: 1px solid #e0e0e0; }
.s-opt { height: 33px; }
```
